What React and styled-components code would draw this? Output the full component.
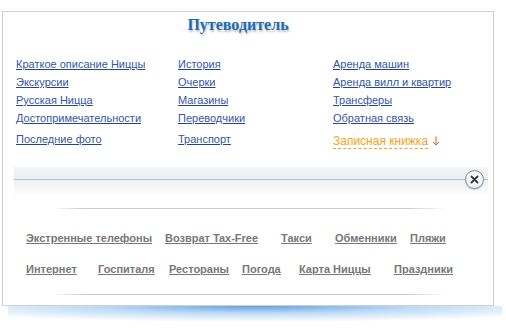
import React from "react";
import styled, { createGlobalStyle } from "styled-components";

const GlobalStyle = createGlobalStyle`
  body {
    margin: 0;
    background: #fff;
    font-family: "Liberation Sans", Arial, sans-serif;
  }
`;

const Page = styled.div`
  width: 506px;
  height: 328px;
  overflow: hidden;
  padding-top: 11px;
  box-sizing: border-box;
`;

const Panel = styled.div`
  position: relative;
  margin-left: 2px;
  width: 492px;
  height: 295px;
  box-sizing: border-box;
  border: 1px solid #cfcfcf;
  background: #fff;
`;

const Title = styled.h2`
  margin: 3px 0 0 0;
  padding-right: 20px;
  text-align: center;
  font-family: "Liberation Serif", "DejaVu Serif", serif;
  font-size: 16px;
  line-height: 20px;
  font-weight: bold;
  color: #1b6db3;
  text-shadow: 1px 2px 2px rgba(0, 0, 0, 0.25);
`;

const LinkGrid = styled.div`
  display: grid;
  grid-template-columns: 162px 155px 1fr;
  margin: 20px 0 0 13px;
`;

const NavLink = styled.a`
  display: block;
  font-size: 11px;
  line-height: 18px;
  color: #3556a6;
  text-decoration: underline;
  text-decoration-color: #24468c;
  text-underline-offset: 1px;
  cursor: pointer;
  margin-top: ${p => (p.$last ? "3px" : "0")};
`;

const NoteLink = styled.a`
  display: inline-block;
  margin-top: 7px;
  font-size: 12px;
  line-height: 14px;
  color: #f7a21c;
  text-decoration: none;
  border-bottom: 1px dashed #f7a21c;
  cursor: pointer;
`;

const NoteCell = styled.div`
  display: flex;
  align-items: flex-start;
  gap: 4px;
`;

const Arrow = styled.svg`
  margin-top: 9px;
  flex: none;
`;

const Band = styled.div`
  position: relative;
  margin: 18px 5px 0 11px;
  height: 30px;
  background: linear-gradient(
    to bottom,
    #f4f5f6 0px,
    #eceef0 12px,
    #b4c3cc 12px,
    #b4c3cc 13px,
    #edf0f3 13px,
    #ffffff 30px
  );
`;

const CloseButton = styled.button`
  position: absolute;
  right: 4px;
  top: 3px;
  width: 19px;
  height: 19px;
  padding: 0;
  border-radius: 50%;
  border: 1px solid #8a8f94;
  background: radial-gradient(circle at 50% 35%, #ffffff, #e9ebed);
  box-shadow: 0 1px 1px rgba(0, 0, 0, 0.2);
  display: flex;
  align-items: center;
  justify-content: center;
  cursor: pointer;
`;

const Rule = styled.div`
  margin: ${p => p.$top}px 47px 0 49px;
  height: 1px;
  background: linear-gradient(
    to right,
    rgba(200, 205, 214, 0) 0%,
    #c6cbd3 8%,
    #c6cbd3 90%,
    rgba(200, 205, 214, 0) 100%
  );
`;

const BottomLinks = styled.div`
  display: flex;
  flex-direction: column;
  gap: 17px;
  margin: 22px 0 0 23px;
`;

const BottomRow = styled.div`
  display: flex;
`;

const Cell = styled.div`
  width: ${p => p.$w}px;
  flex: none;
  font-size: 11px;
  line-height: 14px;
`;

const InfoLink = styled.a`
  font-size: 11px;
  line-height: 14px;
  font-weight: bold;
  color: #777;
  text-decoration: underline;
  text-underline-offset: 1px;
  cursor: pointer;
`;

const Glow = styled.div`
  margin: 0 0 0 8px;
  width: 494px;
  height: 16px;
  background: radial-gradient(
    ellipse 72% 100% at 50% 0%,
    rgba(70, 145, 220, 0.85) 0%,
    rgba(110, 175, 235, 0.45) 45%,
    rgba(255, 255, 255, 0) 100%
  );
`;

const columns = [
  ["Краткое описание Ниццы", "Экскурсии", "Русская Ницца", "Достопримечательности"],
  ["История", "Очерки", "Магазины", "Переводчики"],
  ["Аренда машин", "Аренда вилл и квартир", "Трансферы", "Обратная связь"],
];

const row1 = [
  ["Экстренные телефоны", 139],
  ["Возврат Tax-Free", 116],
  ["Такси", 54],
  ["Обменники", 75],
  ["Пляжи", 60],
];

const row2 = [
  ["Интернет", 72],
  ["Госпиталя", 71],
  ["Рестораны", 73],
  ["Погода", 57],
  ["Карта Ниццы", 95],
  ["Праздники", 70],
];

export default function App() {
  return (
    <Page>
      <GlobalStyle />
      <Panel>
        <Title>Путеводитель</Title>
        <LinkGrid>
          {[0, 1, 2, 3].map(r =>
            columns.map((col, c) => <NavLink key={`${r}-${c}`}>{col[r]}</NavLink>)
          )}
          <NavLink $last>Последние фото</NavLink>
          <NavLink $last>Транспорт</NavLink>
          <NoteCell>
            <NoteLink>Записная книжка</NoteLink>
            <Arrow width="8" height="10" viewBox="0 0 8 10">
              <path d="M4 0.5V9M1 6L4 9L7 6" stroke="#de5a30" strokeWidth="1" fill="none" />
            </Arrow>
          </NoteCell>
        </LinkGrid>
        <Band>
          <CloseButton aria-label="close">
            <svg width="9" height="9" viewBox="0 0 9 9">
              <path d="M1.5 1.5L7.5 7.5M7.5 1.5L1.5 7.5" stroke="#333" strokeWidth="1.8" strokeLinecap="round" />
            </svg>
          </CloseButton>
        </Band>
        <Rule $top={11} />
        <BottomLinks>
          <BottomRow>
            {row1.map(([t, w]) => (
              <Cell key={t} $w={w}><InfoLink>{t}</InfoLink></Cell>
            ))}
          </BottomRow>
          <BottomRow>
            {row2.map(([t, w]) => (
              <Cell key={t} $w={w}><InfoLink>{t}</InfoLink></Cell>
            ))}
          </BottomRow>
        </BottomLinks>
        <Rule $top={18} />
      </Panel>
      <Glow />
    </Page>
  );
}
